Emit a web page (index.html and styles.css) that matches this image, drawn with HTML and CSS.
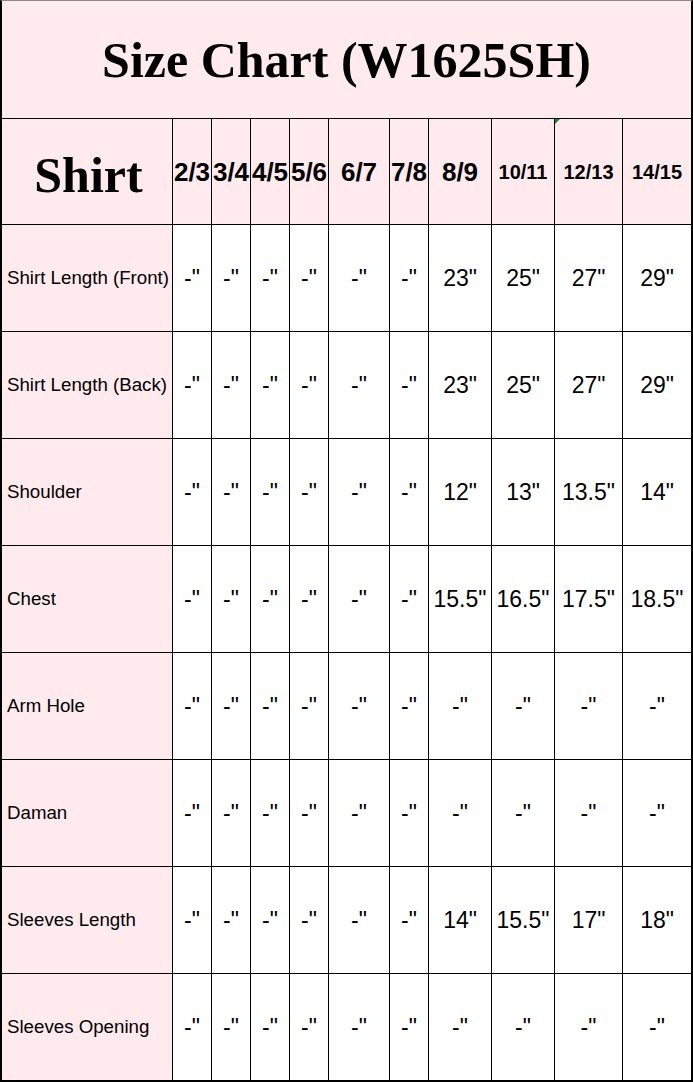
FILE: index.html
```html
<!DOCTYPE html>
<html>
<head>
<meta charset="utf-8">
<link rel="stylesheet" href="styles.css">
</head>
<body>
<div class="chart">
  <div class="cell title">Size Chart (W1625SH)</div>

  <div class="cell head label-head">Shirt</div>
  <div class="cell head">2/3</div>
  <div class="cell head">3/4</div>
  <div class="cell head">4/5</div>
  <div class="cell head">5/6</div>
  <div class="cell head">6/7</div>
  <div class="cell head">7/8</div>
  <div class="cell head">8/9</div>
  <div class="cell head small">10/11</div>
  <div class="cell head small note">12/13</div>
  <div class="cell head small">14/15</div>

  <div class="cell label">Shirt Length (Front)</div>
  <div class="cell val">-"</div><div class="cell val">-"</div><div class="cell val">-"</div><div class="cell val">-"</div><div class="cell val">-"</div><div class="cell val">-"</div>
  <div class="cell val">23"</div><div class="cell val">25"</div><div class="cell val">27"</div><div class="cell val">29"</div>

  <div class="cell label">Shirt Length (Back)</div>
  <div class="cell val">-"</div><div class="cell val">-"</div><div class="cell val">-"</div><div class="cell val">-"</div><div class="cell val">-"</div><div class="cell val">-"</div>
  <div class="cell val">23"</div><div class="cell val">25"</div><div class="cell val">27"</div><div class="cell val">29"</div>

  <div class="cell label">Shoulder</div>
  <div class="cell val">-"</div><div class="cell val">-"</div><div class="cell val">-"</div><div class="cell val">-"</div><div class="cell val">-"</div><div class="cell val">-"</div>
  <div class="cell val">12"</div><div class="cell val">13"</div><div class="cell val">13.5"</div><div class="cell val">14"</div>

  <div class="cell label">Chest</div>
  <div class="cell val">-"</div><div class="cell val">-"</div><div class="cell val">-"</div><div class="cell val">-"</div><div class="cell val">-"</div><div class="cell val">-"</div>
  <div class="cell val">15.5"</div><div class="cell val">16.5"</div><div class="cell val">17.5"</div><div class="cell val">18.5"</div>

  <div class="cell label">Arm Hole</div>
  <div class="cell val">-"</div><div class="cell val">-"</div><div class="cell val">-"</div><div class="cell val">-"</div><div class="cell val">-"</div><div class="cell val">-"</div>
  <div class="cell val">-"</div><div class="cell val">-"</div><div class="cell val">-"</div><div class="cell val">-"</div>

  <div class="cell label">Daman</div>
  <div class="cell val">-"</div><div class="cell val">-"</div><div class="cell val">-"</div><div class="cell val">-"</div><div class="cell val">-"</div><div class="cell val">-"</div>
  <div class="cell val">-"</div><div class="cell val">-"</div><div class="cell val">-"</div><div class="cell val">-"</div>

  <div class="cell label">Sleeves Length</div>
  <div class="cell val">-"</div><div class="cell val">-"</div><div class="cell val">-"</div><div class="cell val">-"</div><div class="cell val">-"</div><div class="cell val">-"</div>
  <div class="cell val">14"</div><div class="cell val">15.5"</div><div class="cell val">17"</div><div class="cell val">18"</div>

  <div class="cell label">Sleeves Opening</div>
  <div class="cell val">-"</div><div class="cell val">-"</div><div class="cell val">-"</div><div class="cell val">-"</div><div class="cell val">-"</div><div class="cell val">-"</div>
  <div class="cell val">-"</div><div class="cell val">-"</div><div class="cell val">-"</div><div class="cell val">-"</div>
</div>
</body>
</html>
```
FILE: styles.css
```css
html, body {
  margin: 0;
  padding: 0;
  background: #ffffff;
}

.chart {
  box-sizing: border-box;
  width: 693px;
  height: 1082px;
  display: grid;
  grid-template-columns: 170px 38px 38px 38px 38px 60px 38px 62px 62px 67px 68px;
  grid-template-rows: 117px 105px repeat(8, 106px);
  gap: 1px;
  background: #000000;
  border-top: 1px solid #8a8a8a;
  border-left: 2px solid #000000;
  border-right: 2px solid #000000;
  border-bottom: 2px solid #000000;
}

.cell {
  display: flex;
  align-items: center;
  justify-content: center;
  background: #ffffff;
  color: #000000;
  font-family: "Liberation Sans", Arial, sans-serif;
  white-space: nowrap;
  overflow: visible;
  position: relative;
}

.title {
  grid-column: 1 / -1;
  background: #ffeaed;
  font-family: "Liberation Serif", "Times New Roman", serif;
  font-weight: bold;
  font-size: 50px;
  padding-top: 1px;
}

.head {
  background: #ffeaed;
  font-weight: bold;
  font-size: 26px;
  padding-top: 2px;
}

.head.small {
  font-size: 20px;
}

.label-head {
  font-family: "Liberation Serif", "Times New Roman", serif;
  font-size: 50px;
  padding-left: 3px;
  padding-top: 6px;
}

.note::before {
  content: "";
  position: absolute;
  left: 0;
  top: 0;
  width: 0;
  height: 0;
  border-top: 5px solid #1d8a2a;
  border-right: 5px solid transparent;
}

.label {
  background: #ffeaed;
  justify-content: flex-start;
  padding-left: 5px;
  font-size: 18.7px;
}

.val {
  font-size: 23px;
}
```
